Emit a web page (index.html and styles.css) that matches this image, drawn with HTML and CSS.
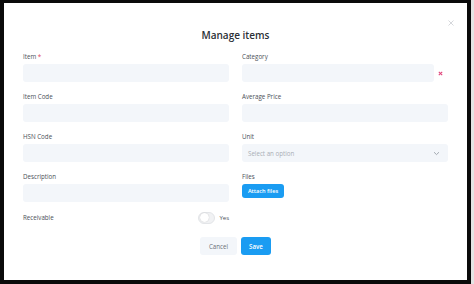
FILE: index.html
```html
<!DOCTYPE html>
<html>
<head>
<meta charset="utf-8">
<link rel="stylesheet" href="styles.css">
</head>
<body>
<div class="frame">
  <div class="modal">
    <svg class="close" width="6" height="6" viewBox="0 0 6 6"><path d="M0.5 0.5 L5.5 5.5 M5.5 0.5 L0.5 5.5" stroke="#c3c6cb" stroke-width="0.7"/></svg>
    <h1 class="title">Manage items</h1>
    <div class="grid">
      <div class="field">
        <label class="label">Item <span class="req">*</span></label>
        <div class="input"></div>
      </div>
      <div class="field">
        <label class="label">Category</label>
        <div class="with-clear">
          <div class="input"></div>
          <svg class="clear" width="5" height="5" viewBox="0 0 5 5"><path d="M0.8 0.8 L4.2 4.2 M4.2 0.8 L0.8 4.2" stroke="#e0457b" stroke-width="1.1"/></svg>
        </div>
      </div>
      <div class="field">
        <label class="label">Item Code</label>
        <div class="input"></div>
      </div>
      <div class="field">
        <label class="label">Average Price</label>
        <div class="input"></div>
      </div>
      <div class="field">
        <label class="label">HSN Code</label>
        <div class="input"></div>
      </div>
      <div class="field">
        <label class="label">Unit</label>
        <div class="input select">
          <span class="placeholder">Select an option</span>
          <svg class="chev" width="7" height="5" viewBox="0 0 7 5"><path d="M1 1.2 L3.5 3.6 L6 1.2" fill="none" stroke="#9aa0a8" stroke-width="0.9"/></svg>
        </div>
      </div>
      <div class="field">
        <label class="label">Description</label>
        <div class="input"></div>
      </div>
      <div class="field">
        <label class="label">Files</label>
        <div class="btn-line"><button class="btn btn-attach">Attach files</button></div>
      </div>
      <div class="toggle-row">
        <span class="label">Receivable</span>
        <span class="toggle-wrap"><span class="toggle"><span class="knob"></span></span><span class="yes">Yes</span></span>
      </div>
    </div>
    <div class="actions">
      <button class="btn btn-cancel">Cancel</button>
      <button class="btn btn-save">Save</button>
    </div>
  </div>
</div>
</body>
</html>
```
FILE: styles.css
```css
html, body {
  margin: 0;
  padding: 0;
}
body {
  width: 474px;
  height: 284px;
  background: #e4e4e4;
  font-family: "Open Sans", "Liberation Sans", sans-serif;
  overflow: hidden;
}
.frame {
  box-sizing: border-box;
  width: 471px;
  height: 284px;
  border-style: solid;
  border-color: #0a0a0a;
  border-width: 3px 4px 4px 4px;
  background: #ffffff;
}
.modal {
  position: relative;
  padding: 24px 19px 0 19px;
}
.close {
  position: absolute;
  right: 13px;
  top: 17px;
}
.title {
  margin: 0 0 9px 0;
  text-align: center;
  font-size: 10px;
  line-height: 16px;
  font-weight: 600;
  color: #2b2f36;
}
.grid {
  display: grid;
  grid-template-columns: 206px 206px;
  column-gap: 13px;
  row-gap: 10px;
}
.field {
  display: flex;
  flex-direction: column;
  gap: 2px;
}
.label {
  display: block;
  font-size: 6.2px;
  line-height: 10px;
  color: #4a4f57;
}
.req {
  color: #e0405e;
}
.input {
  height: 18px;
  background: #f3f6fa;
  border-radius: 3px;
}
.with-clear {
  display: flex;
  align-items: center;
}
.with-clear .input {
  width: 192px;
}
.clear {
  margin-left: 4px;
}
.select {
  display: flex;
  align-items: center;
  justify-content: space-between;
  padding: 0 8px 0 6px;
}
.placeholder {
  font-size: 6.2px;
  color: #a9aeb5;
}
.btn-line {
  display: flex;
}
.btn {
  border: none;
  font-family: inherit;
  border-radius: 3px;
  padding: 0;
  cursor: pointer;
}
.btn-attach {
  width: 42px;
  height: 14px;
  background: #1a9cf2;
  color: #ffffff;
  font-size: 5.6px;
  font-weight: 600;
}
.toggle-row {
  display: flex;
  align-items: center;
  justify-content: space-between;
  height: 13px;
  margin-top: -1px;
}
.toggle-wrap {
  display: flex;
  align-items: center;
  gap: 4px;
}
.toggle {
  box-sizing: border-box;
  width: 17px;
  height: 12px;
  border-radius: 6px;
  background: #f1f2f4;
  border: 1px solid #e3e5e8;
  display: flex;
  align-items: center;
  padding-left: 1px;
}
.knob {
  width: 9px;
  height: 9px;
  border-radius: 50%;
  background: #ffffff;
  box-shadow: 0 0 1px rgba(0,0,0,0.25);
}
.yes {
  font-size: 6px;
  color: #4a4f57;
}
.actions {
  display: flex;
  justify-content: center;
  gap: 4px;
  margin-top: 13px;
}
.btn-cancel {
  width: 37px;
  height: 18px;
  background: #f3f6fa;
  color: #6b7078;
  font-size: 6.2px;
}
.btn-save {
  width: 30px;
  height: 18px;
  background: #1a9cf2;
  color: #ffffff;
  font-size: 6.2px;
  font-weight: 600;
}
```
